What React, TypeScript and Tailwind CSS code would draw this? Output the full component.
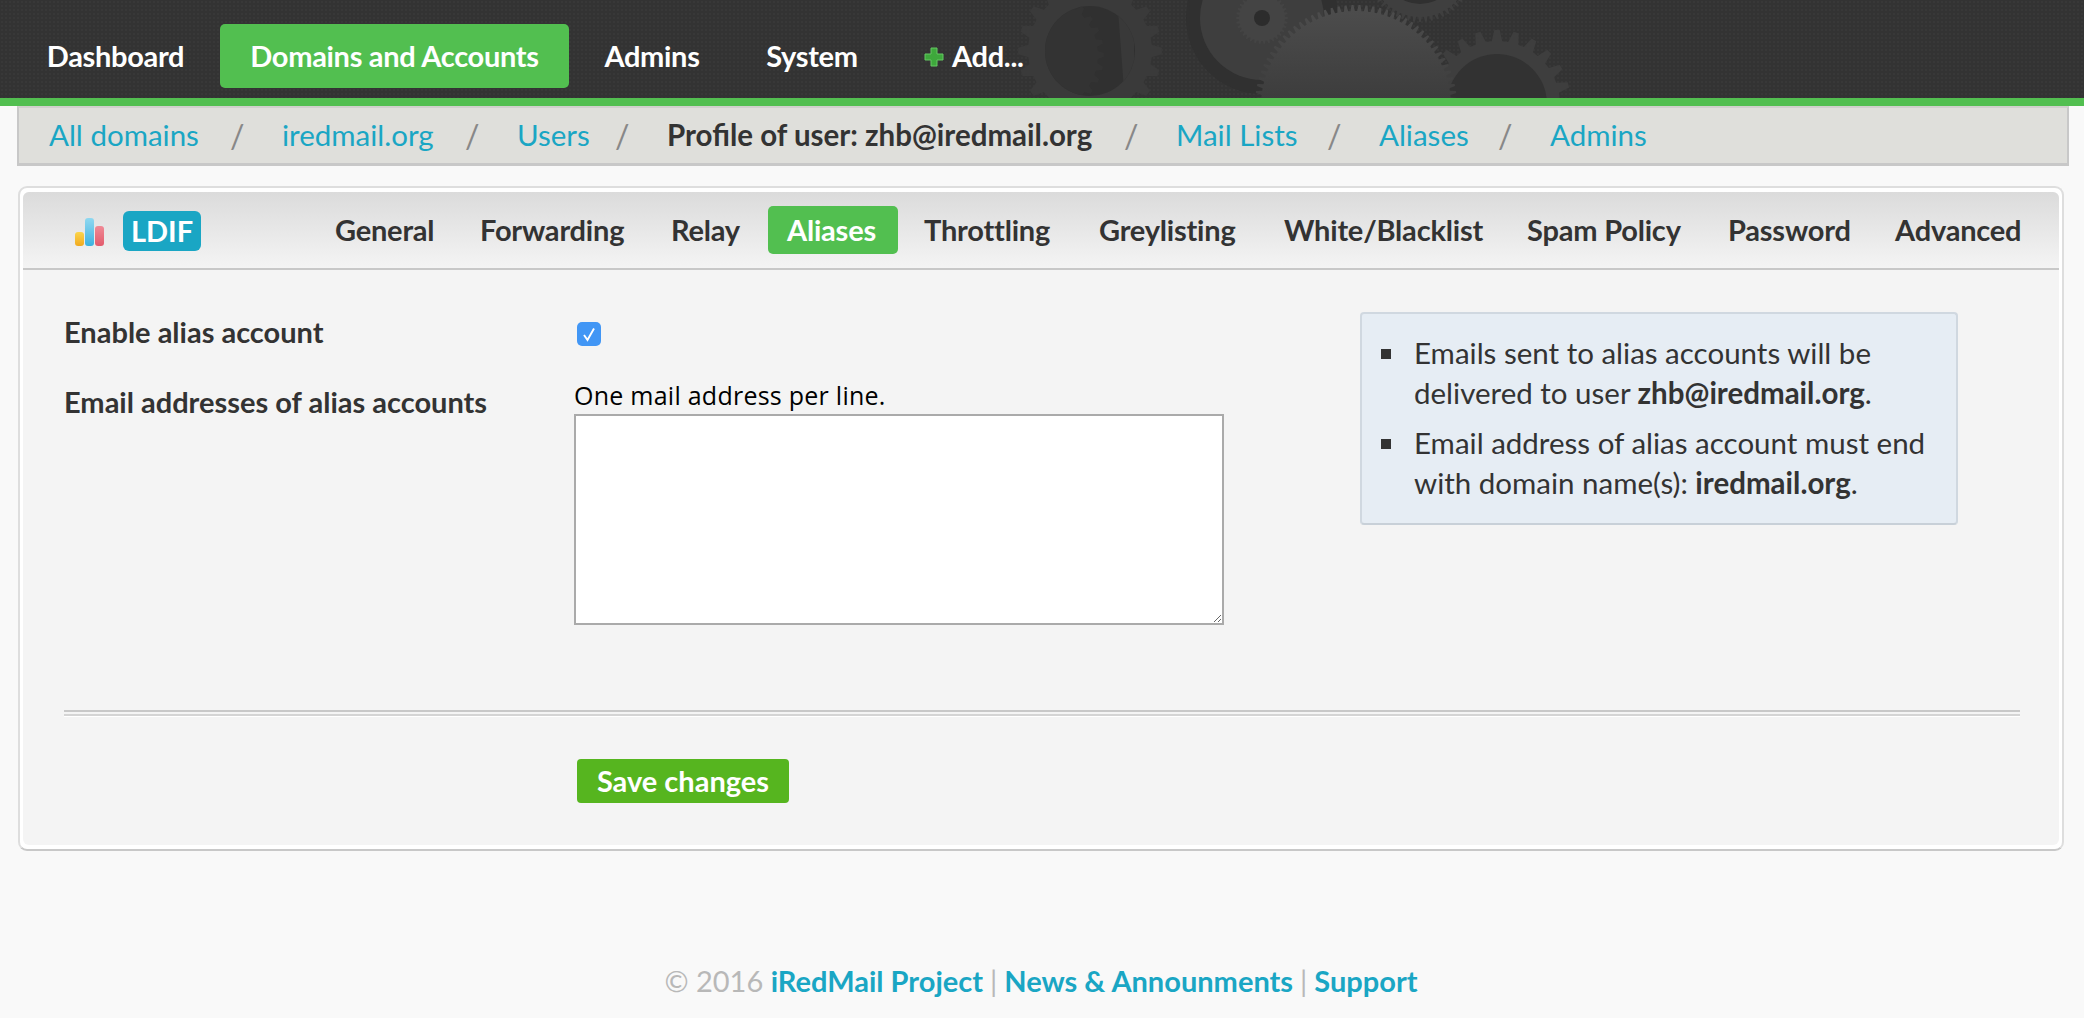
import React from 'react';

const FONT = 'font-["Lato","Noto_Sans",sans-serif]';

// builds a toothed wheel outline around 0,0
function gearPath(outer: number, inner: number, teeth: number) {
  const parts: string[] = [];
  const step = (Math.PI * 2) / teeth;
  for (let i = 0; i < teeth; i++) {
    const a = i * step;
    const pts: [number, number][] = [
      [inner, a - step * 0.32],
      [outer, a - step * 0.14],
      [outer, a + step * 0.14],
      [inner, a + step * 0.32],
    ];
    pts.forEach(([r, t], j) => {
      const x = (r * Math.cos(t)).toFixed(2);
      const y = (r * Math.sin(t)).toFixed(2);
      parts.push(`${i === 0 && j === 0 ? 'M' : 'L'}${x} ${y}`);
    });
  }
  return parts.join('') + 'Z';
}

const Gears: React.FC = () => (
  <svg className="absolute left-[1000px] top-0" width="600" height="98" viewBox="1000 0 600 98" aria-hidden="true">
    <defs>
      <linearGradient id="bigGear" x1="0" y1="0" x2="0" y2="1">
        <stop offset="0" stopColor="#4d4d4d" />
        <stop offset="0.55" stopColor="#3a3a3a" />
        <stop offset="1" stopColor="#333333" />
      </linearGradient>
    </defs>
    {/* left wheel */}
    <g transform="translate(1090 51)">
      <path d={gearPath(72, 62, 20)} fill="#3a3a3a" />
      <circle r="45" fill="#303030" />
    </g>
    <clipPath id="leftHole">
      <circle cx="1090" cy="51" r="45" />
    </clipPath>
    <g clipPath="url(#leftHole)">
      <g transform="translate(1040 55)">
        <path d={gearPath(64, 58, 30)} fill="#333333" />
      </g>
      <path d="M1118 10 L1134 20 L1134 90 L1124 90Z" fill="#393939" />
    </g>
    {/* disc behind */}
    <g transform="translate(1262 18)">
      <circle r="76" fill="#303030" />
      <circle r="62" fill="#3e3e3e" />
      <path d={gearPath(26, 23, 34)} fill="#444444" />
      <circle r="8" fill="#2c2c2c" />
    </g>
    {/* right wheel */}
    <g transform="translate(1497 104)">
      <path d={gearPath(74, 63, 24)} fill="#3e3e3e" />
      <circle r="50" fill="#323232" />
    </g>
    {/* top wheel */}
    <g transform="translate(1420 -32)">
      <path d={gearPath(54, 49, 56)} fill="#3f3f3f" />
      <circle r="36" fill="#303030" />
    </g>
    {/* big wheel */}
    <g transform="translate(1356 106)">
      <path d={gearPath(101, 95, 90)} fill="url(#bigGear)" />
    </g>
  </svg>
);

const topNav = [
  { label: 'Dashboard', cls: 'w-[197px]' },
  { label: 'Domains and Accounts', cls: 'w-[349px] bg-[#52bf50] rounded-[5px]' },
  { label: 'Admins', cls: 'w-[154px]' },
  { label: 'System', cls: 'w-[154px]' },
];

const crumbs = [
  { label: 'All domains', cls: 'w-[151px]' },
  { label: 'iredmail.org', cls: 'w-[153px]' },
  { label: 'Users', cls: 'w-[68px]' },
  { label: 'Profile of user: zhb@iredmail.org', cls: 'w-[427px] font-bold text-[#333]' },
  { label: 'Mail Lists', cls: 'w-[121px]' },
  { label: 'Aliases', cls: 'w-[89px]' },
  { label: 'Admins', cls: 'w-[95px]' },
];

const tabs = [
  { label: 'General', cls: 'w-[145px]' },
  { label: 'Forwarding', cls: 'w-[191px]' },
  { label: 'Relay', cls: 'w-[97px]' },
  { label: 'Aliases', cls: 'w-[130px] pl-[19px] mr-[26px] bg-[#52bf50] text-white rounded-[5px]' },
  { label: 'Throttling', cls: 'w-[175px]' },
  { label: 'Greylisting', cls: 'w-[185px]' },
  { label: 'White/Blacklist', cls: 'w-[243px]' },
  { label: 'Spam Policy', cls: 'w-[201px]' },
  { label: 'Password', cls: 'w-[167px]' },
  { label: 'Advanced', cls: 'w-[124px]' },
];

export default function App() {
  return (
    <div className={`${FONT} min-h-[1018px] overflow-hidden bg-[#f9f9f9] text-[#333] text-[29px]`}>
      {/* Top bar */}
      <div className="relative h-[106px] overflow-hidden border-b-[8px] border-[#52bf50] bg-[#333] bg-[radial-gradient(circle,#383838_1px,transparent_1px)] bg-[length:4px_4px]">
        <Gears />
        <nav className="relative flex items-center gap-[6px] pl-[17px] pt-[24px]">
          {topNav.map(item => (
            <a key={item.label} className={`${item.cls} flex h-[64px] items-center justify-center font-bold text-white tracking-[-0.3px]`}>
              {item.label}
            </a>
          ))}
          <a className="ml-[29px] flex h-[64px] items-center font-bold text-white tracking-[-0.3px]">
            <svg className="mr-[8px] mt-[2px]" width="20" height="20" viewBox="0 0 20 20" aria-hidden="true">
              <path d="M7 1h6v6h6v6h-6v6H7v-6H1V7h6z" fill="#3ea83c" stroke="#64c862" strokeWidth="1" />
            </svg>
            Add...
          </a>
        </nav>
      </div>

      {/* Breadcrumb */}
      <div className="ml-[17px] mr-[15px] flex h-[60px] items-center border-x-2 border-b-[3px] border-t-2 border-[#c8c8c8] border-t-[#d0d0cc] bg-[#dfdfdb] pl-[30px] text-[29.5px] text-[#1aa6c4]">
        {crumbs.map((c, i) => (
          <React.Fragment key={c.label}>
            <a className={`${c.cls} whitespace-nowrap`}>{c.label}</a>
            {i < crumbs.length - 1 && <span className="ml-[30px] mr-[41px] w-[11px] text-center font-normal text-[#888] text-[32px]">/</span>}
          </React.Fragment>
        ))}
      </div>

      {/* Card */}
      <div className="ml-[18px] mr-[20px] mt-[20px] rounded-[9px] border-2 border-[#dedede] border-b-[#c8c8c8] bg-white px-[3px] py-[4px]">
        <div className="rounded-[6px] bg-[#f4f4f4]">
          <div className="flex h-[78px] items-center rounded-t-[6px] border-b-2 border-[#c8c8c8] bg-gradient-to-b from-[#dbdbdb] to-[#f4f4f4] pl-[52px]">
            <div className="mt-[4px] flex h-[28px] w-[29px] items-end gap-[1px]">
              <span className="h-[14px] w-[9px] rounded-[3px] bg-gradient-to-b from-[#fbd54a] to-[#f0a91c] blur-[0.5px]" />
              <span className="h-[28px] w-[9px] rounded-[3px] bg-gradient-to-b from-[#8fd8f0] to-[#38b2e0] blur-[0.5px]" />
              <span className="h-[20px] w-[9px] rounded-[3px] bg-gradient-to-b from-[#f08a96] to-[#e25a6c] blur-[0.5px]" />
            </div>
            <span className="ml-[19px] mt-[2px] flex h-[40px] w-[78px] items-center justify-center rounded-[6px] bg-[#1aa6c4] font-bold text-white">LDIF</span>
            <div className="ml-[134px] flex items-center">
              {tabs.map(t => (
                <a key={t.label} className={`${t.cls} flex h-[48px] shrink-0 items-center whitespace-nowrap font-bold tracking-[-0.2px]`}>
                  {t.label}
                </a>
              ))}
            </div>
          </div>

          <div className="px-[41px]">
            <div className="flex h-[440px] items-start pt-[42px]">
              <div className="w-[510px] shrink-0 font-bold">
                <div className="flex h-[40px] items-center">Enable alias account</div>
                <div className="mt-[30px] flex h-[40px] items-center">Email addresses of alias accounts</div>
              </div>
              <div className="w-[786px] shrink-0">
                <div className="ml-[3px] mt-[10px] flex h-[24px] w-[24px] items-center justify-center rounded-[5px] bg-[#4196f5]">
                  <svg width="16" height="18" viewBox="0 0 16 18" aria-hidden="true">
                    <path d="M3 10 L6.5 15 L13 3.5" fill="none" stroke="#fff" strokeWidth="1.9" />
                  </svg>
                </div>
                <div className="mt-[32px] h-[34px] whitespace-nowrap font-['Open_Sans',sans-serif] text-[25px] leading-[34px] tracking-[0.25px] text-black">
                  One mail address per line.
                </div>
                <textarea className="mt-[2px] block h-[211px] w-[650px] border-2 border-[#aaa] bg-white" />
              </div>
              <div className="h-[213px] w-[598px] shrink-0 rounded-[4px] border-2 border-[#d0d8e0] border-b-[#c8d0d8] bg-[#e6edf4] pl-[19px] pr-[20px] pt-[19px] text-[29.5px]">
                <ul className="space-y-[10px]">
                  <li className="flex leading-[40px]">
                    <span className="mr-[23px] mt-[16px] h-[10px] w-[10px] shrink-0 bg-[#333]" />
                    <span>Emails sent to alias accounts will be delivered to user <b>zhb@iredmail.org</b>.</span>
                  </li>
                  <li className="flex leading-[40px]">
                    <span className="mr-[23px] mt-[16px] h-[10px] w-[10px] shrink-0 bg-[#333]" />
                    <span>Email address of alias account must end with domain name(s): <b>iredmail.org</b>.</span>
                  </li>
                </ul>
              </div>
            </div>

            <div className="h-[7px] w-[1956px] border-b-[1px] border-t-2 border-b-white border-t-[#c8c8c8] bg-[linear-gradient(#f4f4f4_2px,#d4d4d4_2px)]" />

            <div className="pb-[42px] pt-[42px]">
              <button className="ml-[513px] flex h-[44px] w-[212px] items-center justify-center rounded-[4px] bg-[#56b51f] font-bold text-white">
                Save changes
              </button>
            </div>
          </div>
        </div>
      </div>

      {/* Footer */}
      <div className="mt-[108px] flex justify-center whitespace-nowrap pr-[2px] text-[#b8b8b8]">
        <span>© 2016&nbsp;</span>
        <a className="font-bold text-[#1aa6c4]">iRedMail Project</a>
        <span className="px-[7px]">|</span>
        <a className="font-bold text-[#1aa6c4]">News &amp; Announments</a>
        <span className="px-[7px]">|</span>
        <a className="font-bold text-[#1aa6c4]">Support</a>
      </div>
    </div>
  );
}
